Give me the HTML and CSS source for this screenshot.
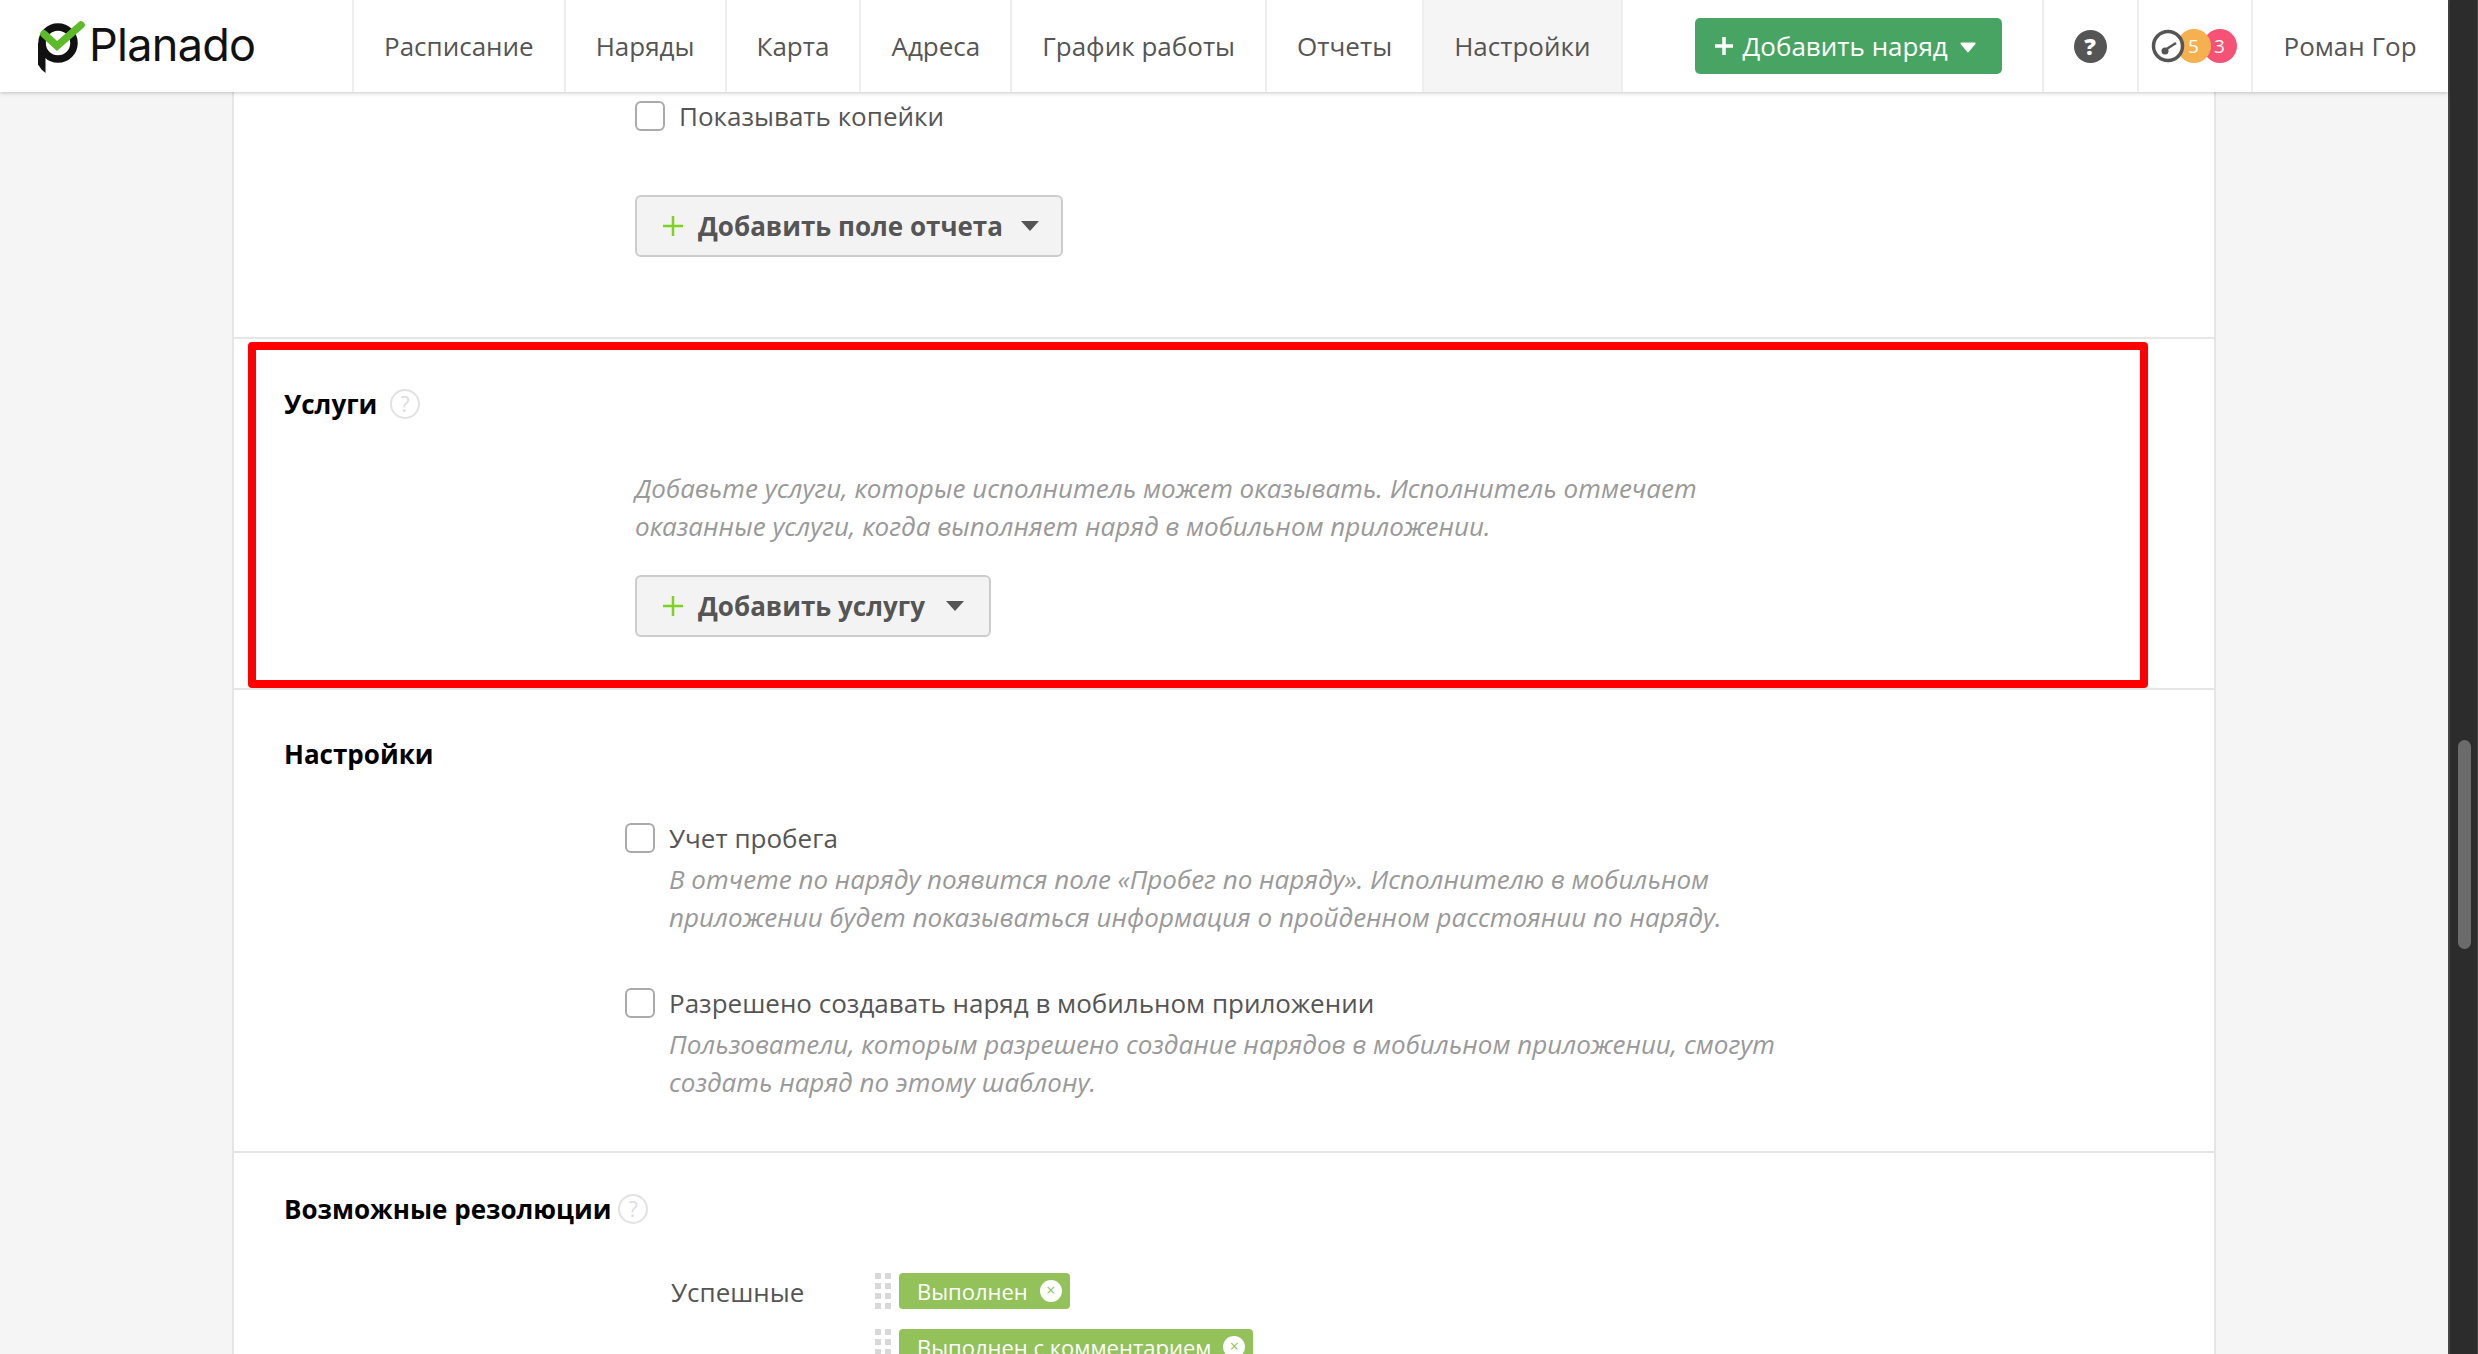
FILE: index.html
```html
<!DOCTYPE html>
<html lang="ru">
<head>
  <meta charset="UTF-8">
  <title>Planado</title>
  <link rel="stylesheet" href="styles.css">
</head>
<body>
  <div class="window">
    <div class="app">
      <header class="topbar">
        <a class="logo">
          <svg class="logo-mark" viewBox="0 0 48 56" width="48" height="56">
            <circle cx="20" cy="24" r="16" fill="none" stroke="#111" stroke-width="7.500"/>
            <path d="M0 24h7.500v30l-4-3.500-3.500-5z" fill="#111"/>
            <path d="M6 15l13 12L43 6" fill="none" stroke="#5dbb2a" stroke-width="7.500" stroke-linecap="round"/>
          </svg>
          <span class="logo-text">Planado</span>
        </a>
        <nav class="nav">
          <a class="nav-item">Расписание</a>
          <a class="nav-item">Наряды</a>
          <a class="nav-item">Карта</a>
          <a class="nav-item">Адреса</a>
          <a class="nav-item">График работы</a>
          <a class="nav-item">Отчеты</a>
          <a class="nav-item nav-item-active">Настройки</a>
        </nav>
        <button class="add-job">
          <svg viewBox="0 0 20 20" width="20" height="20"><path d="M10 1v18M1 10h18" stroke="#fff" stroke-width="3.500"/></svg>
          <span>Добавить наряд</span>
          <svg class="add-job-caret" viewBox="0 0 18 12" width="16" height="11"><path d="M1.500 1.500h15L9 10.500z" fill="#fff" stroke="#fff" stroke-width="2" stroke-linejoin="round"/></svg>
        </button>
        <div class="top-cell top-help">
          <span class="help-dark">?</span>
        </div>
        <div class="top-cell top-stats">
          <svg class="gauge" viewBox="0 0 34 34" width="34" height="34">
            <circle cx="17" cy="17" r="14.500" fill="#fff" stroke="#555" stroke-width="3.500"/>
            <path d="M14 21l11-7" stroke="#555" stroke-width="2.500"/>
            <circle cx="14" cy="22" r="3.500" fill="#555"/>
          </svg>
          <span class="count count-orange">5</span>
          <span class="count count-red">3</span>
        </div>
        <div class="top-cell top-user">Роман Гор</div>
      </header>

      <div class="page">
        <main class="sheet">
          <section class="block block-first">
            <label class="check field">
              <span class="box"></span>
              Показывать копейки
            </label>
            <button class="add-btn field add-btn-report">
              <svg viewBox="0 0 22 22" width="22" height="22"><path d="M11 1v20M1 11h20" stroke="#7ed321" stroke-width="2.500"/></svg>
              <span>Добавить поле отчета</span>
              <svg viewBox="0 0 20 12" width="20" height="12"><path d="M1 1h18l-9 10z" fill="#555"/></svg>
            </button>
          </section>

          <section class="block block-services">
            <h2 class="block-title">Услуги <span class="help-light">?</span></h2>
            <p class="hint services-hint">Добавьте услуги, которые исполнитель может оказывать. Исполнитель отмечает<br>оказанные услуги, когда выполняет наряд в мобильном приложении.</p>
            <button class="add-btn field">
              <svg viewBox="0 0 22 22" width="22" height="22"><path d="M11 1v20M1 11h20" stroke="#7ed321" stroke-width="2.500"/></svg>
              <span>Добавить услугу</span>
              <svg viewBox="0 0 20 12" width="20" height="12"><path d="M1 1h18l-9 10z" fill="#555"/></svg>
            </button>
            <div class="callout"></div>
          </section>

          <section class="block block-settings">
            <h2 class="block-title">Настройки</h2>
            <div class="option">
              <label class="check"><span class="box"></span>Учет пробега</label>
              <p class="hint">В отчете по наряду появится поле «Пробег по наряду». Исполнителю в мобильном<br>приложении будет показываться информация о пройденном расстоянии по наряду.</p>
            </div>
            <div class="option">
              <label class="check"><span class="box"></span>Разрешено создавать наряд в мобильном приложении</label>
              <p class="hint">Пользователи, которым разрешено создание нарядов в мобильном приложении, смогут<br>создать наряд по этому шаблону.</p>
            </div>
          </section>

          <section class="block block-resolutions">
            <h2 class="block-title">Возможные резолюции <span class="help-light">?</span></h2>
            <div class="resolutions">
              <div class="resolutions-label">Успешные</div>
              <div class="tags">
                <div class="tag-row">
                  <span class="grip"><i></i><i></i><i></i><i></i><i></i><i></i><i></i><i></i></span>
                  <span class="tag">Выполнен <span class="tag-close">×</span></span>
                </div>
                <div class="tag-row">
                  <span class="grip"><i></i><i></i><i></i><i></i><i></i><i></i><i></i><i></i></span>
                  <span class="tag">Выполнен с комментарием <span class="tag-close">×</span></span>
                </div>
              </div>
            </div>
          </section>
        </main>
      </div>
    </div>

    <div class="scrollbar"><div class="scrollbar-thumb"></div></div>
  </div>
</body>
</html>
```

FILE: styles.css
```css
* {
  box-sizing: border-box;
}

html, body {
  margin: 0;
  height: 100%;
  overflow: hidden;
}

body {
  font-family: "Open Sans", "Noto Sans", sans-serif;
  font-size: 26px;
  line-height: 38px;
  color: #555;
  background: #f5f5f5;
}

button {
  font-family: inherit;
  cursor: pointer;
}

.window {
  display: flex;
  height: 1354px;
}

.app {
  flex: 1;
  min-width: 0;
  display: flex;
  flex-direction: column;
}

/* top bar */
.topbar {
  position: relative;
  z-index: 2;
  display: flex;
  align-items: stretch;
  height: 92px;
  flex: none;
  background: #fff;
  box-shadow: 0 1px 4px rgba(0, 0, 0, 0.22);
}

.logo {
  width: 352px;
  flex: none;
  display: flex;
  align-items: flex-start;
  padding: 19px 0 0 38px;
}

.logo-mark {
  flex: none;
}

.logo-text {
  margin: 1px 0 0 3px;
  font-family: Inter, sans-serif;
  font-size: 45px;
  line-height: 50px;
  letter-spacing: -0.7px;
  color: #111;
}

.nav {
  display: flex;
}

.nav-item {
  display: flex;
  align-items: center;
  padding: 0 30px;
  border-left: 2px solid #eee;
}

.nav-item:last-child {
  border-right: 2px solid #eee;
}

.nav-item-active {
  background: #f5f5f5;
}

.add-job {
  display: flex;
  align-items: center;
  gap: 9px;
  align-self: center;
  width: 307px;
  height: 56px;
  margin-left: 72px;
  padding: 0 0 0 19px;
  border: none;
  border-radius: 5px;
  background: #48a463;
  color: #fff;
  font-size: 26px;
}

.add-job-caret {
  margin: 3px 0 0 3px;
}

.top-cell {
  display: flex;
  align-items: center;
  border-left: 2px solid #eee;
}

.top-help {
  width: 95px;
  margin-left: 40px;
  justify-content: center;
}

.help-dark {
  width: 33px;
  height: 33px;
  border-radius: 50%;
  background: #555;
  color: #fff;
  font-size: 23px;
  font-weight: 800;
  line-height: 33px;
  text-align: center;
}

.top-stats {
  width: 114px;
  padding-left: 12px;
}

.gauge {
  position: relative;
  z-index: 2;
  flex: none;
}

.count {
  width: 34px;
  height: 34px;
  flex: none;
  border-radius: 50%;
  color: #fff;
  font-size: 19px;
  line-height: 34px;
  text-align: center;
}

.count-orange {
  position: relative;
  z-index: 1;
  margin-left: -8px;
  background: #f5b04f;
}

.count-red {
  margin-left: -8px;
  background: #f55275;
}

.top-user {
  flex: 1;
  padding-left: 31px;
}

/* settings sheet */
.page {
  flex: 1;
  min-height: 0;
  overflow: hidden;
  padding-left: 232px;
}

.sheet {
  width: 1984px;
  background: #fff;
  border-left: 2px solid #e6e6e6;
  border-right: 2px solid #e6e6e6;
}

.block {
  position: relative;
  padding: 46px 50px 51px;
  border-bottom: 2px solid #e6e6e6;
}

.block-first {
  height: 247px;
  padding-top: 5px;
}

.block-settings {
  padding-top: 45px;
  padding-bottom: 50px;
}

.block-resolutions {
  padding-top: 37px;
  border-bottom: none;
}

.block-resolutions .help-light {
  margin-left: 0;
}

.block-title {
  margin: 0;
  font-size: 26px;
  font-weight: 700;
  line-height: 38px;
  color: #000;
}

.help-light {
  display: inline-block;
  width: 30px;
  height: 30px;
  margin-left: 6px;
  border: 2px solid #e2e2e2;
  border-radius: 50%;
  color: #ddd;
  font-size: 21px;
  font-weight: 400;
  line-height: 26px;
  text-align: center;
  vertical-align: 2px;
}

.field {
  margin-left: 351px;
}

.check {
  display: flex;
  align-items: center;
  gap: 14px;
}

.box {
  width: 30px;
  height: 30px;
  flex: none;
  border: 2px solid #aaa;
  border-radius: 6px;
  background: #fff;
}

.hint {
  margin: 3px 0 0;
  color: #999;
  font-style: italic;
}

.services-hint {
  margin: 46px 0 0 351px;
}

.add-btn {
  display: flex;
  align-items: center;
  height: 62px;
  padding: 0 24px 0 25px;
  border: 2px solid #ccc;
  border-radius: 6px;
  background: #f3f3f3;
  color: #555;
  font-size: 26px;
  font-weight: 700;
}

.add-btn span {
  margin: 0 20px 0 14px;
}

.add-btn-report {
  margin-top: 60px;
  padding-right: 21px;
}

.add-btn-report span {
  margin-right: 17px;
}

.block-services .add-btn {
  margin-top: 30px;
}

.callout {
  position: absolute;
  top: 3px;
  left: 14px;
  width: 1900px;
  height: 346px;
  border: 8px solid #f00;
  border-radius: 4px;
  pointer-events: none;
}

.option {
  margin: 46px 0 0 341px;
}

.option + .option {
  margin-top: 48px;
}

.option .hint {
  margin-left: 44px;
}

.resolutions {
  display: flex;
  margin: 45px 0 0 387px;
}

.resolutions-label {
  width: 204px;
  flex: none;
}

.tags {
  display: flex;
  flex-direction: column;
  gap: 20px;
}

.tag-row {
  display: flex;
  gap: 9px;
}

.grip {
  display: grid;
  grid-template-columns: 6px 6px;
  grid-auto-rows: 6px;
  gap: 4px;
  width: 15px;
}

.grip i {
  background: #d8d8d8;
}

.tag {
  display: flex;
  align-items: center;
  gap: 12px;
  height: 36px;
  padding: 0 8px 0 18px;
  border-radius: 4px;
  background: #93c25b;
  color: #fff;
  font-size: 22px;
}

.tag-close {
  width: 22px;
  height: 22px;
  border-radius: 50%;
  background: #fff;
  color: #93c25b;
  font-size: 16px;
  line-height: 21px;
  text-align: center;
}

/* browser scrollbar */
.scrollbar {
  width: 30px;
  flex: none;
  padding: 740px 6px 0 8px;
  background: #2c2c2c;
  border-left: 2px solid #444;
  border-right: 1px solid #444;
}

.scrollbar-thumb {
  height: 209px;
  border-radius: 8px;
  background: #6b6b6b;
}
```
